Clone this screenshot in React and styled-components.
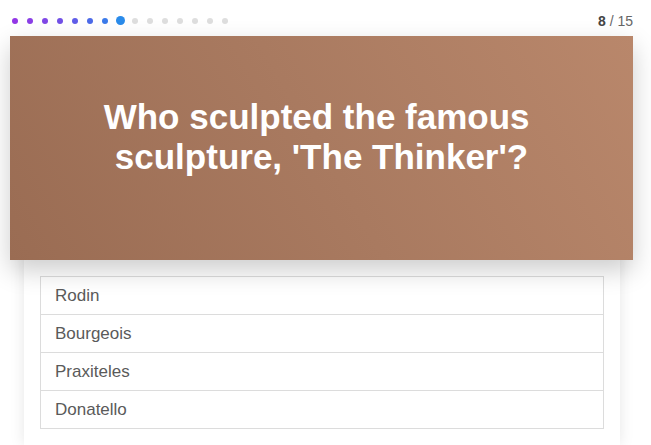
import React from 'react'
import styled, { createGlobalStyle } from 'styled-components'

const GlobalStyle = createGlobalStyle`
  body {
    margin: 0;
    background: #fff;
    font-family: 'Liberation Sans', Arial, sans-serif;
    overflow: hidden;
  }
`

const QuizWrapper = styled.div`
  width: 651px;
  height: 445px;
  padding: 0 18px 0 10px;
  box-sizing: border-box;
  display: flex;
  flex-direction: column;
`

const TopBar = styled.div`
  height: 36px;
  display: flex;
  align-items: center;
  justify-content: space-between;
  padding-top: 5px;
  box-sizing: border-box;
`

const Dots = styled.div`
  display: flex;
  align-items: center;
  gap: 9px;
  padding-left: 2px;
`

const Dot = styled.span`
  width: ${p => (p.$active ? 9 : 6)}px;
  height: ${p => (p.$active ? 9 : 6)}px;
  margin: 0 ${p => (p.$active ? -1.5 : 0)}px;
  border-radius: 50%;
  background: ${p => p.$color};
`

const Counter = styled.div`
  font-size: 14px;
  color: #666;

  b {
    color: #444;
  }
`

const Banner = styled.div`
  position: relative;
  z-index: 2;
  height: 224px;
  background: linear-gradient(60deg, #9a6c53 0%, #a97a60 50%, #b9876b 100%);
  box-shadow: 0 10px 24px rgba(0, 0, 0, 0.2);
  display: flex;
  align-items: center;
  justify-content: center;
  padding: 0 75px 22px 75px;
  box-sizing: border-box;
`

const Question = styled.h1`
  margin: 0;
  color: #fff;
  font-size: 35px;
  line-height: 40px;
  font-weight: bold;
  text-align: center;
`

const Card = styled.div`
  flex: 1;
  margin: -10px 13px 0 14px;
  padding: 26px 16px 0;
  background: #fff;
  box-shadow: 0 0 14px rgba(0, 0, 0, 0.1);
`

const Options = styled.ul`
  list-style: none;
  margin: 0;
  padding: 0;
  border: 1px solid #dcdcdc;
`

const Option = styled.li`
  height: 37px;
  display: flex;
  align-items: center;
  padding-left: 14px;
  font-size: 17px;
  color: #5a5a5a;
  border-top: ${p => (p.$first ? 'none' : '1px solid #dcdcdc')};
`

const dotColors = [
  '#9236e6', '#8a3fe6', '#7f47e6', '#7150e6',
  '#5f5ce8', '#4c6ae8', '#3b7aea', '#2a8bea'
]

const answers = ['Rodin', 'Bourgeois', 'Praxiteles', 'Donatello']

export default function App () {
  const current = 8
  const total = 15

  return (
    <QuizWrapper>
      <GlobalStyle />
      <TopBar>
        <Dots>
          {Array.from({ length: total }).map((_, i) => (
            <Dot
              key={i}
              $active={i === current - 1}
              $color={i < current ? dotColors[i] : '#dedede'}
            />
          ))}
        </Dots>
        <Counter><b>{current}</b> / {total}</Counter>
      </TopBar>
      <Banner>
        <Question>
          Who sculpted the famous{'\u00a0'}<br />sculpture, 'The Thinker'?
        </Question>
      </Banner>
      <Card>
        <Options>
          {answers.map((a, i) => (
            <Option key={a} $first={i === 0}>{a}</Option>
          ))}
        </Options>
      </Card>
    </QuizWrapper>
  )
}
